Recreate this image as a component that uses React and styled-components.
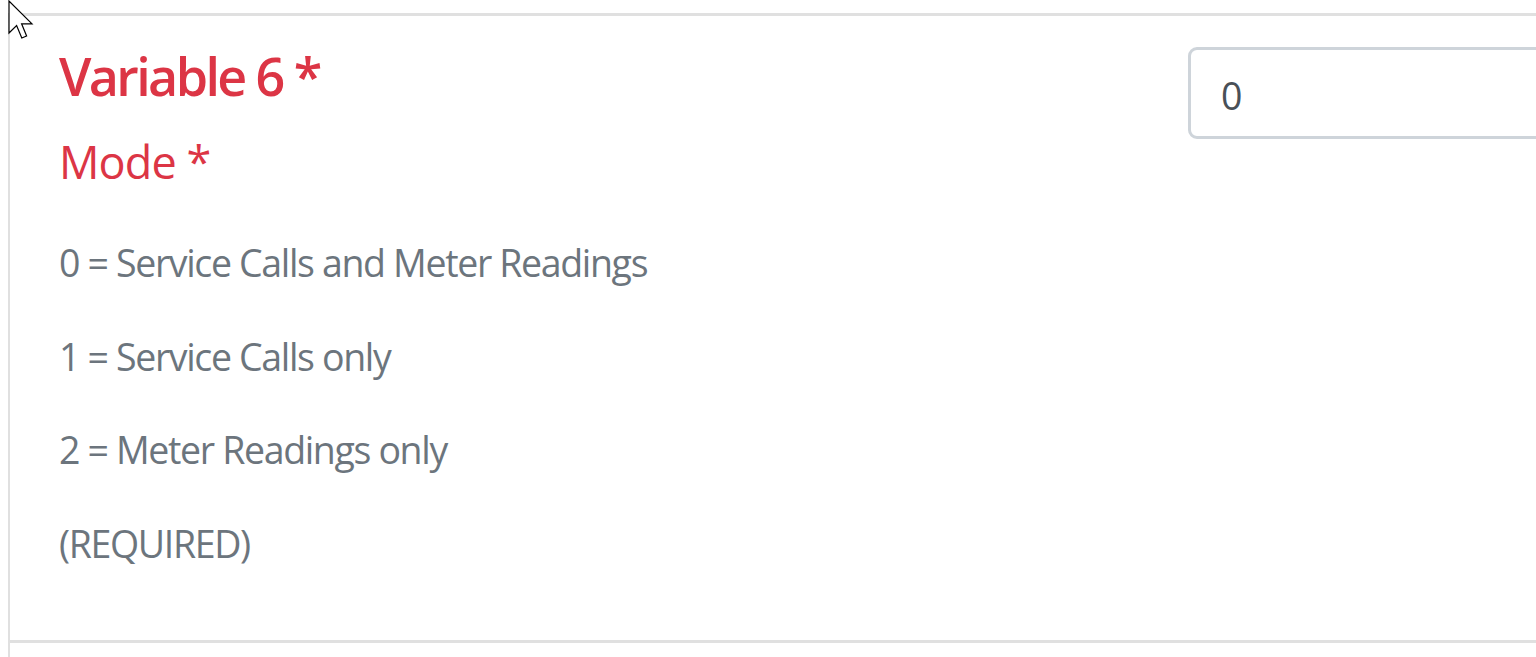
import React from "react";
import styled, { createGlobalStyle } from "styled-components";

const GlobalStyle = createGlobalStyle`
  html, body {
    margin: 0;
    padding: 0;
    overflow: hidden;
    background: #fff;
  }
  body {
    font-family: "Open Sans", "Noto Sans", Arial, sans-serif;
    color: #6c757d;
  }
`;

const Page = styled.div`
  position: relative;
  padding: 13px 0 0 8px;
`;

const Card = styled.section`
  width: 1700px;
  box-sizing: border-box;
  border-top: 3px solid #e0e0e0;
  border-left: 2px solid #e0e0e0;
  border-bottom: 3px solid #e0e0e0;
  padding: 29px 48px 30px 49px;
`;

const NextCard = styled.div`
  height: 40px;
  border-left: 2px solid #e0e0e0;
`;

const Row = styled.div`
  display: grid;
  grid-template-columns: 1129px 1fr;
  align-items: start;
`;

const Info = styled.div`
  display: flex;
  flex-direction: column;
`;

const Title = styled.h4`
  margin: 0 0 21px;
  font-size: 52px;
  line-height: 1.2;
  font-weight: 600;
  color: #dc3545;
  letter-spacing: -2.6px;
`;

const FieldLabel = styled.label`
  display: block;
  margin: 0 0 39px;
  font-size: 45px;
  line-height: 1.5;
  font-weight: 400;
  color: #dc3545;
  letter-spacing: -0.9px;
`;

const Help = styled.p`
  margin: 0 0 37.5px;
  font-size: 37.5px;
  line-height: 1.5;
  color: #6c757d;
  letter-spacing: -1.35px;
`;

const ValueInput = styled.input`
  display: block;
  box-sizing: border-box;
  width: 420px;
  height: 92px;
  margin-top: 2px;
  padding: 4px 30px 0;
  border: 3px solid #ced4da;
  border-radius: 9px;
  font-family: inherit;
  font-size: 37.5px;
  color: #495057;
  background: #fff;
  outline: none;
`;

const Cursor = styled.svg`
  position: absolute;
  top: 0;
  left: 8px;
  width: 26px;
  height: 41px;
  pointer-events: none;
`;

const helpLines = [
  "0 = Service Calls and Meter Readings",
  "1 = Service Calls only",
  "2 = Meter Readings only",
  "(REQUIRED)",
];

export default function App() {
  return (
    <>
      <GlobalStyle />
      <Page>
        <Card>
          <Row>
            <Info>
              <Title>Variable 6 *</Title>
              <FieldLabel htmlFor="variable-6">Mode *</FieldLabel>
              {helpLines.map((line) => (
                <Help key={line}>{line}</Help>
              ))}
            </Info>
            <ValueInput id="variable-6" type="text" defaultValue="0" />
          </Row>
        </Card>
        <NextCard />
        <Cursor viewBox="0 0 13 20.5">
          <path
            d="M0.5 0.5 L0.5 16.5 L4.3 12.8 L6.9 19 L9.3 18 L6.8 11.9 L12 11.9 Z"
            fill="#fff"
            stroke="#000"
            strokeWidth="0.6"
            strokeLinejoin="miter"
          />
        </Cursor>
      </Page>
    </>
  );
}
